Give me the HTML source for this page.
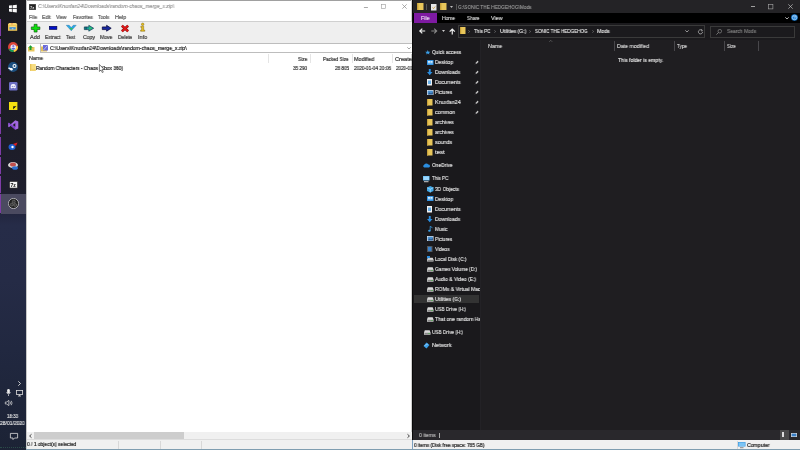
<!DOCTYPE html>
<html><head><meta charset="utf-8">
<style>
*{margin:0;padding:0;box-sizing:border-box}
html,body{width:800px;height:450px;overflow:hidden;background:#000;font-family:"Liberation Sans",sans-serif}
.a{position:absolute}
.t{position:absolute;white-space:nowrap;line-height:1;transform-origin:0 0;will-change:transform}
svg.a{overflow:visible;will-change:transform}
</style></head><body>
<div class="a" style="left:0;top:0;width:26px;height:450px;background:linear-gradient(#19191e 0px,#1c1c25 100px,#1e1e2d 190px,#22253e 213px,#262c48 225px,#252b46 280px,#212840 350px,#1e253a 400px,#1c2335 450px)"></div>
<div class="a" style="left:0px;top:19px;width:1.2px;height:17px;background:#7e3ca6;"></div>
<div class="a" style="left:0px;top:39px;width:1.2px;height:16px;background:#7e3ca6;"></div>
<div class="a" style="left:0px;top:59px;width:1.2px;height:16px;background:#7e3ca6;"></div>
<div class="a" style="left:0px;top:78px;width:1.2px;height:16px;background:#7e3ca6;"></div>
<div class="a" style="left:0px;top:98px;width:1.2px;height:16px;background:#7e3ca6;"></div>
<div class="a" style="left:0px;top:117px;width:1.2px;height:17px;background:#7e3ca6;"></div>
<div class="a" style="left:0px;top:137px;width:1.2px;height:18px;background:#7e3ca6;"></div>
<div class="a" style="left:0px;top:157px;width:1.2px;height:17px;background:#7e3ca6;"></div>
<div class="a" style="left:0px;top:176px;width:1.2px;height:17px;background:#7e3ca6;"></div>
<div class="a" style="left:0px;top:194px;width:1.2px;height:19px;background:#7e3ca6;"></div>
<div class="a" style="left:1.2px;top:194px;width:24.8px;height:19.5px;background:#4b4a60;"></div>
<svg class="a" style="left:8.8px;top:5px" width="7.8" height="7.6" viewBox="0 0 7.8 7.6"><path d="M0 0.6L2.9 0.25V3.2H0Z M3.6 0.15L7.8 -0.3V3.2H3.6Z M0 3.9H2.9V6.9L0 6.6Z M3.6 3.9H7.8V7.5L3.6 7.0Z" fill="#fafafa"/></svg>
<svg class="a" style="left:8px;top:23.2px" width="9.2" height="7.8" viewBox="0 0 9.2 7.8"><rect x="0" y="1" width="9.2" height="6.8" fill="#ecc455"/><rect x="0.6" y="0" width="8" height="2" fill="#f4d470"/><circle cx="4" cy="0.8" r="0.6" fill="#e05030"/><rect x="1.5" y="3.6" width="6.2" height="0.6" fill="#fff2c0"/><rect x="1.5" y="4.2" width="6.2" height="2.2" fill="#3a8ed8"/><rect x="3.8" y="5.2" width="1.6" height="1.2" fill="#a8d0f0"/></svg>
<svg class="a" style="left:8px;top:42px" width="10" height="10" viewBox="0 0 10 10"><circle cx="5" cy="5" r="5" fill="#db4437"/><path d="M5 5L0.7 7.5A5 5 0 0 0 6 9.9Z" fill="#0f9d58"/><path d="M5 5L9.9 4A5 5 0 0 1 6 9.9Z" fill="#ffcd40"/><circle cx="5.3" cy="5.2" r="2.8" fill="#e8e8f8"/><path d="M3.2 6.8Q5.3 4.5 7.4 6.8A2.6 2.6 0 0 1 3.2 6.8Z" fill="#5a6ad0"/><circle cx="5.3" cy="4.2" r="1.1" fill="#8a7ad8"/></svg>
<svg class="a" style="left:8px;top:62px" width="10" height="10" viewBox="0 0 10 10"><circle cx="5" cy="5" r="5" fill="#1b4f80"/><circle cx="6.5" cy="4" r="2" fill="#fff"/><circle cx="6.5" cy="4" r="1" fill="#1b4f80"/><path d="M0.5 6L4 7.5" stroke="#fff" stroke-width="1.4"/><circle cx="3.5" cy="7.3" r="1.2" fill="#fff"/></svg>
<svg class="a" style="left:8.8px;top:81.5px" width="8.5" height="8.5" viewBox="0 0 8.5 8.5"><rect x="0" y="0" width="8.5" height="8.5" rx="1.2" fill="#6b6fc4"/><path d="M1.6 5.8Q1.4 3.6 2.6 2.3Q4.25 1.8 5.9 2.3Q7.1 3.6 6.9 5.8Q5.8 6.6 5.3 6.3L5 5.8Q4.25 6 3.5 5.8L3.2 6.3Q2.7 6.6 1.6 5.8Z" fill="#f4f4ff"/><circle cx="3.3" cy="4.3" r="0.6" fill="#6b6fc4"/><circle cx="5.2" cy="4.3" r="0.6" fill="#6b6fc4"/></svg>
<svg class="a" style="left:8.8px;top:102px" width="8.4" height="8" viewBox="0 0 8.4 8"><rect x="0" y="0" width="8.4" height="8" fill="#f4e010"/><path d="M4.2 4.2H7.6L4.2 7.6Z" fill="#181818"/><path d="M7.6 4.2V5.5L5.5 7.6H4.2Z" fill="#f4e010"/></svg>
<svg class="a" style="left:7.5px;top:120px" width="10.5" height="10" viewBox="0 0 10.5 10"><path d="M7.3 0.2L10.3 1.6V8.4L7.3 9.8L2.7 5.8L0.9 7.2L0.2 6.8V3.2L0.9 2.8L2.7 4.2ZM7.3 3L4.7 5L7.3 7Z" fill="#a268e0"/><path d="M0.2 3.2L0.9 2.8L7.3 7.5V9.8L2.7 5.8Z" fill="#7a3cc8"/></svg>
<svg class="a" style="left:8px;top:142px" width="10" height="8" viewBox="0 0 10 8"><ellipse cx="4" cy="5" rx="3.5" ry="3" fill="#1e5fd0"/><path d="M5 2L9.5 0.5L8 4Z" fill="#e02020"/><circle cx="4.5" cy="5" r="1.2" fill="#fff"/></svg>
<svg class="a" style="left:8px;top:161px" width="11" height="9" viewBox="0 0 11 9"><ellipse cx="5" cy="4" rx="5" ry="3" fill="#d8d8d8"/><ellipse cx="5" cy="3.5" rx="3" ry="2" fill="#c0504d"/><ellipse cx="7" cy="7" rx="3" ry="1.8" fill="#2c6fd0"/></svg>
<svg class="a" style="left:8.5px;top:181px" width="9" height="7.5" viewBox="0 0 9 7.5"><rect x="0.4" y="0.4" width="8.2" height="6.7" fill="#f4f4f4" stroke="#111" stroke-width="0.6"/><text x="1.4" y="5.9" font-size="5.2" fill="#111" font-family="Liberation Sans" font-weight="bold">7z</text></svg>
<svg class="a" style="left:7.5px;top:198px" width="11" height="11" viewBox="0 0 11 11"><circle cx="5.5" cy="5.5" r="5.1" fill="#202020" stroke="#d8d8d8" stroke-width="0.7"/><circle cx="5.8" cy="3.6" r="1.5" fill="#3a3a3a" stroke="#9a9a9a" stroke-width="0.4"/><circle cx="3.8" cy="6.6" r="1.5" fill="#3a3a3a" stroke="#9a9a9a" stroke-width="0.4"/><circle cx="7.2" cy="7" r="1.5" fill="#3a3a3a" stroke="#9a9a9a" stroke-width="0.4"/></svg>
<svg class="a" style="left:17.5px;top:380.5px" width="3" height="5" viewBox="0 0 3 5"><path d="M0.3 0.3L2.5 2.5L0.3 4.7" stroke="#ddd" stroke-width="0.9" fill="none"/></svg>
<svg class="a" style="left:6px;top:388.5px" width="5" height="7" viewBox="0 0 5 7"><rect x="1.2" y="0" width="2.6" height="4.5" rx="1.3" fill="#eee"/><path d="M0.3 3.5Q2.5 6.5 4.7 3.5M2.5 5.5V7" stroke="#eee" stroke-width="0.7" fill="none"/></svg>
<svg class="a" style="left:15.5px;top:389.5px" width="7" height="6" viewBox="0 0 7 6"><rect x="0.4" y="0.4" width="6.2" height="4" fill="none" stroke="#ddd" stroke-width="0.8"/><path d="M3.5 4.5V6M2 6H5" stroke="#ddd" stroke-width="0.8"/></svg>
<svg class="a" style="left:5px;top:399.5px" width="8" height="6" viewBox="0 0 8 6"><path d="M0.3 2H1.8L3.8 0.3V5.7L1.8 4H0.3Z" fill="none" stroke="#ddd" stroke-width="0.7"/><path d="M5 1.5Q6 3 5 4.5M6.3 0.8Q7.8 3 6.3 5.2" stroke="#ddd" stroke-width="0.7" fill="none"/></svg>
<div class="t" style="left:7.20px;top:413.99px;font-size:5px;color:#e8e8e8;transform:scaleX(0.881);-webkit-text-stroke:0.13px #e8e8e8;">18:33</div>
<div class="t" style="left:0.20px;top:420.99px;font-size:5px;color:#e8e8e8;transform:scaleX(0.982);-webkit-text-stroke:0.13px #e8e8e8;">28/01/2020</div>
<svg class="a" style="left:9.5px;top:433px" width="8" height="7" viewBox="0 0 8 7"><path d="M0.4 0.4H7.6V5H4.5L3 6.6V5H0.4Z" fill="none" stroke="#ddd" stroke-width="0.8"/></svg>
<div class="a" style="left:0;top:447px;width:26px;height:1px;border-top:1px dotted #2a4a48"></div>
<div class="a" style="left:26px;top:0px;width:386px;height:450px;background:#ffffff;"></div>
<div class="a" style="left:26px;top:0px;width:386px;height:1px;background:#a0a0a0;"></div>
<div class="a" style="left:26px;top:0px;width:1px;height:450px;background:#c8c8c8;"></div>
<div class="a" style="left:410.5px;top:0px;width:1.5px;height:440px;background:#d0d0d0;"></div>
<svg class="a" style="left:29px;top:4px" width="7" height="6" viewBox="0 0 7 6"><rect x="0" y="0" width="7" height="6" fill="#555"/><rect x="0.7" y="0.7" width="5.6" height="4.6" fill="#222"/><text x="0.9" y="4.8" font-size="4.2" fill="#ddd" font-family="Liberation Sans" font-weight="bold">7z</text></svg>
<div class="t" style="left:38.16px;top:4.28px;font-size:5.6px;color:#929292;transform:scaleX(0.897);-webkit-text-stroke:0.13px #929292;font-style:italic">C:\Users\Knuxfan24\Downloads\random-chaos_merge_x.zip\</div>
<div class="t" style="left:363.64px;top:3.98px;font-size:6px;color:#888;transform:scaleX(1.143);-webkit-text-stroke:0.2px #888;">–</div>
<svg class="a" style="left:381px;top:3.5px" width="5" height="5" viewBox="0 0 5 5"><rect x="0.5" y="0.5" width="4" height="4" fill="none" stroke="#999" stroke-width="0.6"/></svg>
<svg class="a" style="left:402px;top:4px" width="5" height="5" viewBox="0 0 5 5"><path d="M0.3 0.3L4.7 4.7M4.7 0.3L0.3 4.7" stroke="#888" stroke-width="0.7"/></svg>
<div class="t" style="left:28.57px;top:14.54px;font-size:5.5px;color:#5a5a5a;transform:scaleX(0.925);-webkit-text-stroke:0.2px #5a5a5a;">File</div>
<div class="t" style="left:42.47px;top:14.54px;font-size:5.5px;color:#5a5a5a;transform:scaleX(0.918);-webkit-text-stroke:0.2px #5a5a5a;">Edit</div>
<div class="t" style="left:56.47px;top:14.54px;font-size:5.5px;color:#5a5a5a;transform:scaleX(0.886);-webkit-text-stroke:0.2px #5a5a5a;">View</div>
<div class="t" style="left:72.67px;top:14.54px;font-size:5.5px;color:#5a5a5a;transform:scaleX(0.879);-webkit-text-stroke:0.2px #5a5a5a;">Favorites</div>
<div class="t" style="left:98.27px;top:14.54px;font-size:5.5px;color:#5a5a5a;transform:scaleX(0.878);-webkit-text-stroke:0.2px #5a5a5a;">Tools</div>
<div class="t" style="left:114.87px;top:14.54px;font-size:5.5px;color:#5a5a5a;transform:scaleX(0.986);-webkit-text-stroke:0.2px #5a5a5a;">Help</div>
<div class="a" style="left:27px;top:21px;width:385px;height:1px;background:#d0d0d0;"></div>
<div class="a" style="left:27px;top:22px;width:385px;height:20.5px;background:#efefef;"></div>
<div class="a" style="left:27px;top:42.5px;width:385px;height:1px;background:#d4d4d4;"></div>
<svg class="a" style="left:30.8px;top:24px" width="9.2" height="8.4" viewBox="0 0 9.2 8.4"><path d="M3.1 0.3H6.1V2.9H8.9V5.5H6.1V8.1H3.1V5.5H0.3V2.9H3.1Z" fill="#10e010" stroke="#064a06" stroke-width="0.6"/></svg>
<svg class="a" style="left:49px;top:26.4px" width="8.2" height="3.8" viewBox="0 0 8.2 3.8"><rect x="0.3" y="0.3" width="7.6" height="3.2" fill="#0010c8" stroke="#000040" stroke-width="0.6"/></svg>
<svg class="a" style="left:65.5px;top:25.3px" width="10.5" height="6" viewBox="0 0 10.5 6"><path d="M0.3 0.3H3.2L5.25 2.6L7.3 0.3H10.2L5.25 5.8Z" fill="#2aa8e8" stroke="#1a6a9a" stroke-width="0.4"/><path d="M3.5 3L5.25 5.2L7 3" fill="#30c060"/></svg>
<svg class="a" style="left:84px;top:24.8px" width="10" height="6.5" viewBox="0 0 10 6.5"><path d="M4.8 0.3L9.7 3.25L4.8 6.2V4.6H0.3V1.9H4.8Z" fill="#18a0a0" stroke="#0a2a40" stroke-width="0.6"/><path d="M1.2 1.9V4.6M2.6 1.9V4.6" stroke="#0a3050" stroke-width="0.6"/><path d="M5.3 1.5L8.3 3.25L5.3 5Z" fill="#30c070"/></svg>
<svg class="a" style="left:102px;top:24.8px" width="9.5" height="6.5" viewBox="0 0 9.5 6.5"><path d="M4.6 0.3L9.2 3.25L4.6 6.2V4.6H0.3V1.9H4.6Z" fill="#1a2aa0" stroke="#000030" stroke-width="0.7"/></svg>
<svg class="a" style="left:121px;top:25px" width="8" height="7" viewBox="0 0 8 7"><path d="M0.9 0.7L7.1 6.3M7.1 0.7L0.9 6.3" stroke="#801010" stroke-width="2.6"/><path d="M0.9 0.7L7.1 6.3M7.1 0.7L0.9 6.3" stroke="#e01818" stroke-width="1.7"/></svg>
<svg class="a" style="left:139.8px;top:23.3px" width="5.4" height="8.6" viewBox="0 0 5.4 8.6"><circle cx="2.7" cy="1.3" r="1.25" fill="#e8c020" stroke="#6a5000" stroke-width="0.4"/><path d="M0.8 3.2H3.7V7.1H4.8V8.3H0.6V7.1H1.6V4.4H0.8Z" fill="#e8c020" stroke="#6a5000" stroke-width="0.4"/></svg>
<div class="t" style="left:30.16px;top:34.58px;font-size:5.6px;color:#3a3a3a;transform:scaleX(1.002);-webkit-text-stroke:0.2px #3a3a3a;">Add</div>
<div class="t" style="left:45.16px;top:34.58px;font-size:5.6px;color:#3a3a3a;transform:scaleX(0.896);-webkit-text-stroke:0.2px #3a3a3a;">Extract</div>
<div class="t" style="left:66.36px;top:34.58px;font-size:5.6px;color:#3a3a3a;transform:scaleX(0.876);-webkit-text-stroke:0.2px #3a3a3a;">Test</div>
<div class="t" style="left:82.56px;top:34.58px;font-size:5.6px;color:#3a3a3a;transform:scaleX(0.920);-webkit-text-stroke:0.2px #3a3a3a;">Copy</div>
<div class="t" style="left:100.46px;top:34.58px;font-size:5.6px;color:#3a3a3a;transform:scaleX(0.899);-webkit-text-stroke:0.2px #3a3a3a;">Move</div>
<div class="t" style="left:117.56px;top:34.58px;font-size:5.6px;color:#3a3a3a;transform:scaleX(0.871);-webkit-text-stroke:0.2px #3a3a3a;">Delete</div>
<div class="t" style="left:137.86px;top:34.58px;font-size:5.6px;color:#3a3a3a;transform:scaleX(0.980);-webkit-text-stroke:0.2px #3a3a3a;">Info</div>
<div class="a" style="left:27px;top:43.5px;width:385px;height:10px;background:#ffffff;"></div>
<svg class="a" style="left:28px;top:45px" width="6.5" height="6.5" viewBox="0 0 6.5 6.5"><path d="M0 2H6.5V6.5H0Z" fill="#e8c860"/><path d="M2.5 0.3L4.8 2.5H3.5V5H1.5V2.5H0.3Z" fill="#1aa030"/></svg>
<div class="a" style="left:39.5px;top:43px;width:373px;height:9.5px;background:#ffffff;border:1px solid #bdbdbd;border-right:none"></div>
<svg class="a" style="left:41px;top:44.8px" width="7" height="6.5" viewBox="0 0 7 6.5"><rect x="0" y="1.5" width="6" height="5" fill="#e2c05a"/><rect x="2" y="0" width="5" height="5.5" fill="#6a6ad8"/><path d="M2.5 5L6.5 0.5" stroke="#d0d0f0" stroke-width="0.8"/></svg>
<div class="t" style="left:49.66px;top:46.08px;font-size:5.6px;color:#222;transform:scaleX(0.900);-webkit-text-stroke:0.2px #222;">C:\Users\Knuxfan24\Downloads\random-chaos_merge_x.zip\</div>
<svg class="a" style="left:406.5px;top:47px" width="4" height="2.5" viewBox="0 0 4 2.5"><path d="M0.3 0.3L2 2L3.7 0.3" stroke="#666" stroke-width="0.6" fill="none"/></svg>
<div class="a" style="left:268px;top:54px;width:0.7px;height:9px;background:#e5e5e5;"></div>
<div class="a" style="left:309.6px;top:54px;width:0.7px;height:9px;background:#e5e5e5;"></div>
<div class="a" style="left:351.6px;top:54px;width:0.7px;height:9px;background:#e5e5e5;"></div>
<div class="a" style="left:392.4px;top:54px;width:0.7px;height:9px;background:#e5e5e5;"></div>
<div class="t" style="left:29.17px;top:56.24px;font-size:5.5px;color:#333;transform:scaleX(0.963);-webkit-text-stroke:0.2px #333;">Name</div>
<div class="t" style="left:298.27px;top:56.54px;font-size:5.5px;color:#333;transform:scaleX(0.856);-webkit-text-stroke:0.2px #333;">Size</div>
<div class="t" style="left:323.27px;top:56.54px;font-size:5.5px;color:#333;transform:scaleX(0.836);-webkit-text-stroke:0.2px #333;">Packed Size</div>
<div class="t" style="left:353.67px;top:56.54px;font-size:5.5px;color:#333;transform:scaleX(0.973);-webkit-text-stroke:0.2px #333;">Modified</div>
<div class="t" style="left:395.27px;top:56.54px;font-size:5.5px;color:#333;transform:scaleX(1.025);-webkit-text-stroke:0.2px #333;">Created</div>
<svg class="a" style="left:29.8px;top:64px" width="5.8" height="6.8" viewBox="0 0 5.8 6.8"><rect x="0" y="0" width="5.8" height="6.8" fill="#f6dc80"/><rect x="0" y="0" width="1.3" height="6.8" fill="#e8c458"/><rect x="1.3" y="5.2" width="4.5" height="1.6" fill="#f0cf68"/></svg>
<div class="t" style="left:35.97px;top:65.64px;font-size:5.5px;color:#1a1a1a;transform:scaleX(0.884);-webkit-text-stroke:0.2px #1a1a1a;">Random Characters - Chaos (Xbox 360)</div>
<div class="t" style="left:293.28px;top:65.84px;font-size:5.3px;color:#333;transform:scaleX(0.874);-webkit-text-stroke:0.2px #333;">35 290</div>
<div class="t" style="left:334.68px;top:65.84px;font-size:5.3px;color:#333;transform:scaleX(0.874);-webkit-text-stroke:0.2px #333;">28 805</div>
<div class="t" style="left:353.68px;top:65.84px;font-size:5.3px;color:#333;transform:scaleX(0.884);-webkit-text-stroke:0.2px #333;">2020-01-04 20:06</div>
<div class="t" style="left:395.68px;top:65.84px;font-size:5.3px;color:#333;transform:scaleX(0.850);-webkit-text-stroke:0.2px #333;">2020-01</div>
<svg class="a" style="left:98.5px;top:64px" width="6" height="9" viewBox="0 0 6 9"><path d="M0.4 0.4V7.5L2 6L3.3 8.6L4.3 8.1L3.1 5.6H5.2Z" fill="#fff" stroke="#333" stroke-width="0.6"/></svg>
<div class="a" style="left:27px;top:431.5px;width:385px;height:7.5px;background:#f0f0f0;"></div>
<div class="a" style="left:34.3px;top:432px;width:149.5px;height:6.8px;background:#cdcdcd;"></div>
<svg class="a" style="left:28.5px;top:433.5px" width="3" height="4" viewBox="0 0 3 4"><path d="M2.5 0.3L0.6 2L2.5 3.7" stroke="#333" stroke-width="0.9" fill="none"/></svg>
<svg class="a" style="left:406.5px;top:433.5px" width="3" height="4" viewBox="0 0 3 4"><path d="M0.5 0.3L2.4 2L0.5 3.7" stroke="#333" stroke-width="0.9" fill="none"/></svg>
<div class="a" style="left:27px;top:439px;width:385px;height:1px;background:#dcdcdc;"></div>
<div class="a" style="left:27px;top:440px;width:385px;height:9px;background:#f0f0f0;"></div>
<div class="a" style="left:117.5px;top:440.5px;width:0.7px;height:8.5px;background:#d8d8d8;"></div>
<div class="a" style="left:159.5px;top:440.5px;width:0.7px;height:8.5px;background:#d8d8d8;"></div>
<div class="a" style="left:201.3px;top:440.5px;width:0.7px;height:8.5px;background:#d8d8d8;"></div>
<div class="t" style="left:26.97px;top:442.24px;font-size:5.5px;color:#222;transform:scaleX(0.891);-webkit-text-stroke:0.2px #222;">0 / 1 object(s) selected</div>
<div class="a" style="left:26px;top:449px;width:386px;height:1px;background:#7f9db0;"></div>
<div class="a" style="left:412px;top:0px;width:1px;height:450px;background:#0a0a0a;"></div>
<div class="a" style="left:413px;top:0px;width:387px;height:12.5px;background:#242326;"></div>
<div class="a" style="left:413px;top:12.5px;width:387px;height:10px;background:#000000;"></div>
<div class="a" style="left:413px;top:22.5px;width:387px;height:17.5px;background:#1b1a1d;"></div>
<div class="a" style="left:413px;top:40px;width:67px;height:390px;background:#1a191c;"></div>
<div class="a" style="left:480px;top:40px;width:320px;height:390px;background:#1f1e21;"></div>
<div class="a" style="left:480px;top:40px;width:1px;height:390px;background:#232226;"></div>
<div class="a" style="left:413px;top:430px;width:387px;height:10px;background:#29282c;"></div>
<svg class="a" style="left:417px;top:3px" width="6.5" height="7" viewBox="0 0 6.5 7"><rect x="0" y="0" width="6.5" height="7" fill="#e8c65a"/><rect x="0" y="0" width="1.4" height="7" fill="#c9a23a"/></svg>
<div class="a" style="left:426px;top:4px;width:0.7px;height:5.5px;background:#555;"></div>
<svg class="a" style="left:431px;top:3.5px" width="5.5" height="6.5" viewBox="0 0 5.5 6.5"><rect x="0" y="0" width="5.5" height="6.5" fill="#e8e8e8"/><path d="M1.5 3.5L2.5 4.6L4.2 2.5" stroke="#d09020" stroke-width="0.7" fill="none"/></svg>
<svg class="a" style="left:440px;top:3px" width="6.5" height="7" viewBox="0 0 6.5 7"><rect x="0" y="0" width="6.5" height="7" fill="#e8c65a"/><rect x="0" y="0" width="1.4" height="7" fill="#c9a23a"/></svg>
<svg class="a" style="left:449.5px;top:5.5px" width="3" height="2" viewBox="0 0 3 2"><path d="M0 0H3L1.5 2Z" fill="#bbb"/></svg>
<div class="a" style="left:455.5px;top:4px;width:0.7px;height:5.5px;background:#555;"></div>
<div class="t" style="left:458.16px;top:4.73px;font-size:5.7px;color:#9a9a9a;transform:scaleX(0.829);-webkit-text-stroke:0.13px #9a9a9a;">G:\SONIC THE HEDGEHOG\Mods</div>
<div class="a" style="left:750.5px;top:5.9px;width:4.5px;height:0.7px;background:#a0a0a0;"></div>
<svg class="a" style="left:768px;top:4px" width="5.5" height="5.5" viewBox="0 0 5.5 5.5"><rect x="0.6" y="0.6" width="4.3" height="4.3" fill="none" stroke="#aaa" stroke-width="0.6"/></svg>
<svg class="a" style="left:788px;top:4px" width="5" height="5" viewBox="0 0 5 5"><path d="M0.3 0.3L4.7 4.7M4.7 0.3L0.3 4.7" stroke="#bbb" stroke-width="0.7"/></svg>
<div class="a" style="left:413.5px;top:12.5px;width:23.5px;height:10px;background:#7e1aa2;"></div>
<div class="t" style="left:420.67px;top:15.74px;font-size:5.5px;color:#e8d8f0;transform:scaleX(0.974);-webkit-text-stroke:0.13px #e8d8f0;">File</div>
<div class="t" style="left:442.17px;top:15.74px;font-size:5.5px;color:#dcdcdc;transform:scaleX(0.892);-webkit-text-stroke:0.13px #dcdcdc;">Home</div>
<div class="t" style="left:466.67px;top:15.74px;font-size:5.5px;color:#dcdcdc;transform:scaleX(0.855);-webkit-text-stroke:0.13px #dcdcdc;">Share</div>
<div class="t" style="left:490.67px;top:15.74px;font-size:5.5px;color:#dcdcdc;transform:scaleX(0.985);-webkit-text-stroke:0.13px #dcdcdc;">View</div>
<svg class="a" style="left:784.5px;top:16.5px" width="4" height="2.5" viewBox="0 0 4 2.5"><path d="M0.3 0.3L2 2L3.7 0.3" stroke="#ddd" stroke-width="0.8" fill="none"/></svg>
<svg class="a" style="left:791px;top:14px" width="7" height="7" viewBox="0 0 7 7"><circle cx="3.5" cy="3.5" r="3.3" fill="#1a7fd8"/><circle cx="3.5" cy="3.5" r="2.2" fill="none" stroke="#fff" stroke-width="0.5"/><text x="2.3" y="5.2" font-size="4.4" fill="#fff" font-family="Liberation Sans">?</text></svg>
<svg class="a" style="left:418.5px;top:28px" width="6.5" height="6" viewBox="0 0 6.5 6"><path d="M6.2 3H1M3.3 0.6L0.8 3L3.3 5.4" stroke="#f0f0f0" stroke-width="1.2" fill="none"/></svg>
<svg class="a" style="left:430.5px;top:28px" width="6.5" height="6" viewBox="0 0 6.5 6"><path d="M0.3 3H5.5M3.2 0.6L5.7 3L3.2 5.4" stroke="#8a8a8a" stroke-width="1.1" fill="none"/></svg>
<svg class="a" style="left:442px;top:30px" width="3" height="2" viewBox="0 0 3 2"><path d="M0 0H3L1.5 2Z" fill="#ccc"/></svg>
<svg class="a" style="left:449px;top:27.8px" width="6.5" height="6.5" viewBox="0 0 6.5 6.5"><path d="M3.25 6.5V1.2M0.7 3.7L3.25 1L5.8 3.7" stroke="#f0f0f0" stroke-width="1.2" fill="none"/></svg>
<div class="a" style="left:457.5px;top:25px;width:247.5px;height:12.5px;background:#1b1a1d;border:0.8px solid #3a3a3a"></div>
<svg class="a" style="left:459.5px;top:27px" width="5.5" height="7" viewBox="0 0 5.5 7"><rect x="0" y="0" width="5.5" height="7" fill="#e8c65a"/><rect x="0" y="0" width="1.2" height="7" fill="#c9a23a"/></svg>
<svg class="a" style="left:468.2px;top:29.8px" width="2.2" height="3" viewBox="0 0 2.2 3"><path d="M0.3 0.3L1.7 1.5L0.3 2.7" stroke="#999" stroke-width="0.5" fill="none"/></svg>
<svg class="a" style="left:494.2px;top:29.8px" width="2.2" height="3" viewBox="0 0 2.2 3"><path d="M0.3 0.3L1.7 1.5L0.3 2.7" stroke="#999" stroke-width="0.5" fill="none"/></svg>
<svg class="a" style="left:529.2px;top:29.8px" width="2.2" height="3" viewBox="0 0 2.2 3"><path d="M0.3 0.3L1.7 1.5L0.3 2.7" stroke="#999" stroke-width="0.5" fill="none"/></svg>
<svg class="a" style="left:591.6px;top:29.8px" width="2.2" height="3" viewBox="0 0 2.2 3"><path d="M0.3 0.3L1.7 1.5L0.3 2.7" stroke="#999" stroke-width="0.5" fill="none"/></svg>
<div class="t" style="left:473.67px;top:28.74px;font-size:5.5px;color:#e6e6e6;transform:scaleX(0.846);-webkit-text-stroke:0.13px #e6e6e6;">This PC</div>
<div class="t" style="left:499.67px;top:28.74px;font-size:5.5px;color:#e6e6e6;transform:scaleX(0.912);-webkit-text-stroke:0.13px #e6e6e6;">Utilities (G:)</div>
<div class="t" style="left:534.67px;top:28.74px;font-size:5.5px;color:#e6e6e6;transform:scaleX(0.828);-webkit-text-stroke:0.13px #e6e6e6;">SONIC THE HEDGEHOG</div>
<div class="t" style="left:596.67px;top:28.74px;font-size:5.5px;color:#e6e6e6;transform:scaleX(0.938);-webkit-text-stroke:0.13px #e6e6e6;">Mods</div>
<svg class="a" style="left:684.5px;top:30px" width="4" height="2.5" viewBox="0 0 4 2.5"><path d="M0.3 0.3L2 2L3.7 0.3" stroke="#ccc" stroke-width="0.7" fill="none"/></svg>
<svg class="a" style="left:697.5px;top:28.5px" width="5" height="5" viewBox="0 0 5 5"><path d="M4.2 1.6A2.1 2.1 0 1 0 4.6 2.9" stroke="#ccc" stroke-width="0.7" fill="none"/><path d="M3.5 0.3L4.4 1.6L3.1 2.1" stroke="#ccc" stroke-width="0.6" fill="none"/></svg>
<div class="a" style="left:710px;top:25.5px;width:85px;height:12px;background:#1b1a1d;border:0.8px solid #3a3a3a"></div>
<svg class="a" style="left:716px;top:28.5px" width="6" height="6" viewBox="0 0 6 6"><circle cx="3.8" cy="2.2" r="1.8" stroke="#999" stroke-width="0.6" fill="none"/><path d="M2.5 3.5L0.4 5.6" stroke="#999" stroke-width="0.7"/></svg>
<div class="t" style="left:727.17px;top:28.74px;font-size:5.5px;color:#7a7a7a;transform:scaleX(0.898);-webkit-text-stroke:0.2px #7a7a7a;">Search Mods</div>
<div class="a" style="left:614.2px;top:40.5px;width:0.9px;height:10px;background:#48474b;"></div>
<div class="a" style="left:674px;top:40.5px;width:0.9px;height:10px;background:#48474b;"></div>
<div class="a" style="left:724.2px;top:40.5px;width:0.9px;height:10px;background:#48474b;"></div>
<div class="a" style="left:758px;top:40.5px;width:0.9px;height:10px;background:#48474b;"></div>
<div class="t" style="left:487.67px;top:43.74px;font-size:5.5px;color:#dcdcdc;transform:scaleX(0.971);-webkit-text-stroke:0.13px #dcdcdc;">Name</div>
<svg class="a" style="left:548.5px;top:40px" width="3.5" height="2" viewBox="0 0 3.5 2"><path d="M0.3 1.8L1.75 0.3L3.2 1.8" stroke="#888" stroke-width="0.5" fill="none"/></svg>
<div class="t" style="left:617.17px;top:43.74px;font-size:5.5px;color:#dcdcdc;transform:scaleX(0.947);-webkit-text-stroke:0.13px #dcdcdc;">Date modified</div>
<div class="t" style="left:677.17px;top:43.74px;font-size:5.5px;color:#dcdcdc;transform:scaleX(0.842);-webkit-text-stroke:0.13px #dcdcdc;">Type</div>
<div class="t" style="left:727.37px;top:43.64px;font-size:5.5px;color:#dcdcdc;transform:scaleX(0.807);-webkit-text-stroke:0.13px #dcdcdc;">Size</div>
<div class="t" style="left:618.17px;top:58.24px;font-size:5.5px;color:#e6e6e6;transform:scaleX(0.924);-webkit-text-stroke:0.13px #e6e6e6;">This folder is empty.</div>
<svg class="a" style="left:424.5px;top:49.8px" width="5.5" height="4.5" viewBox="0 0 5.5 4.5"><path d="M2.8 0L3.5 1.7L5.4 1.8L4 3L4.4 4.5L2.8 3.6L1.2 4.5L1.6 3L0.2 1.8L2.1 1.7Z" fill="#3a9fe8"/></svg>
<div class="t" style="left:431.66px;top:49.98px;font-size:5.6px;color:#e6e6e6;transform:scaleX(0.874);-webkit-text-stroke:0.13px #e6e6e6;">Quick access</div>
<svg class="a" style="left:426.5px;top:59.5px" width="6.5" height="5" viewBox="0 0 6.5 5"><rect x="0" y="0" width="6.5" height="5" fill="#2b8ee0"/><rect x="0.7" y="0.8" width="5.1" height="3.4" fill="#5fb0f0"/><path d="M1 1.2H3V2.6H1Z M3.5 1.2H5.5V2.6H3.5Z" fill="#fff"/></svg>
<div class="t" style="left:435.16px;top:59.68px;font-size:5.6px;color:#e6e6e6;transform:scaleX(0.881);-webkit-text-stroke:0.13px #e6e6e6;">Desktop</div>
<svg class="a" style="left:474.8px;top:59.8px" width="4.2" height="4.4" viewBox="0 0 4.2 4.4"><path d="M2.2 0.4L3.8 2L3.1 2.3L2 3.4L1.9 4L0.4 2.5L1 2.4L2.1 1.3Z" fill="#c8c8c8"/><path d="M1.2 3.2L0.2 4.2" stroke="#c8c8c8" stroke-width="0.5"/></svg>
<svg class="a" style="left:427.0px;top:69px" width="5.5" height="6.5" viewBox="0 0 5.5 6.5"><path d="M1.8 0H3.7V3H5.5L2.75 6.3L0 3H1.8Z" fill="#2b8ee0"/></svg>
<div class="t" style="left:435.16px;top:69.68px;font-size:5.6px;color:#e6e6e6;transform:scaleX(0.907);-webkit-text-stroke:0.13px #e6e6e6;">Downloads</div>
<svg class="a" style="left:474.8px;top:69.8px" width="4.2" height="4.4" viewBox="0 0 4.2 4.4"><path d="M2.2 0.4L3.8 2L3.1 2.3L2 3.4L1.9 4L0.4 2.5L1 2.4L2.1 1.3Z" fill="#c8c8c8"/><path d="M1.2 3.2L0.2 4.2" stroke="#c8c8c8" stroke-width="0.5"/></svg>
<svg class="a" style="left:427.0px;top:78.8px" width="5" height="6.5" viewBox="0 0 5 6.5"><rect x="0" y="0" width="5" height="6.5" fill="#f0f0f0"/><rect x="1" y="1.5" width="3" height="3.5" fill="#6ab0e8"/></svg>
<div class="t" style="left:435.16px;top:79.68px;font-size:5.6px;color:#e6e6e6;transform:scaleX(0.905);-webkit-text-stroke:0.13px #e6e6e6;">Documents</div>
<svg class="a" style="left:474.8px;top:79.8px" width="4.2" height="4.4" viewBox="0 0 4.2 4.4"><path d="M2.2 0.4L3.8 2L3.1 2.3L2 3.4L1.9 4L0.4 2.5L1 2.4L2.1 1.3Z" fill="#c8c8c8"/><path d="M1.2 3.2L0.2 4.2" stroke="#c8c8c8" stroke-width="0.5"/></svg>
<svg class="a" style="left:426.5px;top:89.5px" width="6.5" height="5" viewBox="0 0 6.5 5"><rect x="0" y="0" width="6.5" height="5" fill="#e8e8e8"/><rect x="0.6" y="0.6" width="5.3" height="3.8" fill="#4a90d0"/><path d="M0.6 4.4L2.5 2.5L4 3.6L5.9 2V4.4Z" fill="#2a5a90"/></svg>
<div class="t" style="left:435.16px;top:89.68px;font-size:5.6px;color:#e6e6e6;transform:scaleX(0.844);-webkit-text-stroke:0.13px #e6e6e6;">Pictures</div>
<svg class="a" style="left:474.8px;top:89.8px" width="4.2" height="4.4" viewBox="0 0 4.2 4.4"><path d="M2.2 0.4L3.8 2L3.1 2.3L2 3.4L1.9 4L0.4 2.5L1 2.4L2.1 1.3Z" fill="#c8c8c8"/><path d="M1.2 3.2L0.2 4.2" stroke="#c8c8c8" stroke-width="0.5"/></svg>
<svg class="a" style="left:427.0px;top:98.8px" width="5.5" height="6.5" viewBox="0 0 5.5 6.5"><rect x="0" y="0" width="5.5" height="6.5" fill="#e8c65a"/><rect x="0" y="0" width="1.2" height="6.5" fill="#c9a23a"/></svg>
<div class="t" style="left:435.16px;top:99.68px;font-size:5.6px;color:#e6e6e6;transform:scaleX(0.959);-webkit-text-stroke:0.13px #e6e6e6;">Knuxfan24</div>
<svg class="a" style="left:474.8px;top:99.8px" width="4.2" height="4.4" viewBox="0 0 4.2 4.4"><path d="M2.2 0.4L3.8 2L3.1 2.3L2 3.4L1.9 4L0.4 2.5L1 2.4L2.1 1.3Z" fill="#c8c8c8"/><path d="M1.2 3.2L0.2 4.2" stroke="#c8c8c8" stroke-width="0.5"/></svg>
<svg class="a" style="left:427.0px;top:108.8px" width="5.5" height="6.5" viewBox="0 0 5.5 6.5"><rect x="0" y="0" width="5.5" height="6.5" fill="#e8c65a"/><rect x="0" y="0" width="1.2" height="6.5" fill="#c9a23a"/></svg>
<div class="t" style="left:435.16px;top:109.68px;font-size:5.6px;color:#e6e6e6;transform:scaleX(0.938);-webkit-text-stroke:0.13px #e6e6e6;">common</div>
<svg class="a" style="left:474.8px;top:109.8px" width="4.2" height="4.4" viewBox="0 0 4.2 4.4"><path d="M2.2 0.4L3.8 2L3.1 2.3L2 3.4L1.9 4L0.4 2.5L1 2.4L2.1 1.3Z" fill="#c8c8c8"/><path d="M1.2 3.2L0.2 4.2" stroke="#c8c8c8" stroke-width="0.5"/></svg>
<svg class="a" style="left:427.0px;top:118.8px" width="5.5" height="6.5" viewBox="0 0 5.5 6.5"><rect x="0" y="0" width="5.5" height="6.5" fill="#e8c65a"/><rect x="0" y="0" width="1.2" height="6.5" fill="#c9a23a"/></svg>
<div class="t" style="left:435.16px;top:119.68px;font-size:5.6px;color:#e6e6e6;transform:scaleX(0.892);-webkit-text-stroke:0.13px #e6e6e6;">archives</div>
<svg class="a" style="left:427.0px;top:128.8px" width="5.5" height="6.5" viewBox="0 0 5.5 6.5"><rect x="0" y="0" width="5.5" height="6.5" fill="#e8c65a"/><rect x="0" y="0" width="1.2" height="6.5" fill="#c9a23a"/></svg>
<div class="t" style="left:435.16px;top:129.68px;font-size:5.6px;color:#e6e6e6;transform:scaleX(0.892);-webkit-text-stroke:0.13px #e6e6e6;">archives</div>
<svg class="a" style="left:427.0px;top:138.8px" width="5.5" height="6.5" viewBox="0 0 5.5 6.5"><rect x="0" y="0" width="5.5" height="6.5" fill="#e8c65a"/><rect x="0" y="0" width="1.2" height="6.5" fill="#c9a23a"/></svg>
<div class="t" style="left:435.16px;top:139.68px;font-size:5.6px;color:#e6e6e6;transform:scaleX(0.950);-webkit-text-stroke:0.13px #e6e6e6;">sounds</div>
<svg class="a" style="left:427.0px;top:148.8px" width="5.5" height="6.5" viewBox="0 0 5.5 6.5"><rect x="0" y="0" width="5.5" height="6.5" fill="#e8c65a"/><rect x="0" y="0" width="1.2" height="6.5" fill="#c9a23a"/></svg>
<div class="t" style="left:435.16px;top:149.68px;font-size:5.6px;color:#e6e6e6;transform:scaleX(1.077);-webkit-text-stroke:0.13px #e6e6e6;">test</div>
<svg class="a" style="left:423px;top:163.3px" width="7" height="4.5" viewBox="0 0 7 4.5"><path d="M1.3 4.5A1.3 1.3 0 0 1 1 2A2.4 2.4 0 0 1 5.3 1.6A1.5 1.5 0 0 1 6 4.5Z" fill="#2b8ee0"/></svg>
<div class="t" style="left:431.66px;top:163.08px;font-size:5.6px;color:#e6e6e6;transform:scaleX(0.871);-webkit-text-stroke:0.13px #e6e6e6;">OneDrive</div>
<svg class="a" style="left:423px;top:175.5px" width="6.5" height="6.5" viewBox="0 0 6.5 6.5"><rect x="0" y="0" width="6.5" height="4.5" fill="#5fb8f0"/><rect x="0.5" y="0.5" width="5.5" height="3.5" fill="#9ad8ff"/><rect x="1" y="5.2" width="4.5" height="1" fill="#ccc"/></svg>
<div class="t" style="left:432.16px;top:176.38px;font-size:5.6px;color:#e6e6e6;transform:scaleX(0.832);-webkit-text-stroke:0.13px #e6e6e6;">This PC</div>
<div class="a" style="left:414px;top:294.5px;width:65px;height:8.7px;background:#333333;"></div>
<svg class="a" style="left:426.5px;top:186px" width="6.5" height="6.5" viewBox="0 0 6.5 6.5"><path d="M3.25 0L6.5 1.6V4.9L3.25 6.5L0 4.9V1.6Z" fill="#3fa8e8"/><path d="M3.25 3.2L6.5 1.6M3.25 3.2L0 1.6M3.25 3.2V6.5" stroke="#d8f0ff" stroke-width="0.5"/></svg>
<div class="t" style="left:435.16px;top:186.68px;font-size:5.6px;color:#e6e6e6;transform:scaleX(0.870);-webkit-text-stroke:0.13px #e6e6e6;">3D Objects</div>
<svg class="a" style="left:426.5px;top:196.4px" width="6.5" height="5" viewBox="0 0 6.5 5"><rect x="0" y="0" width="6.5" height="5" fill="#2b8ee0"/><rect x="0.7" y="0.8" width="5.1" height="3.4" fill="#5fb0f0"/><path d="M1 1.2H3V2.6H1Z M3.5 1.2H5.5V2.6H3.5Z" fill="#fff"/></svg>
<div class="t" style="left:435.16px;top:196.58px;font-size:5.6px;color:#e6e6e6;transform:scaleX(0.881);-webkit-text-stroke:0.13px #e6e6e6;">Desktop</div>
<svg class="a" style="left:427.0px;top:205.70000000000002px" width="5" height="6.5" viewBox="0 0 5 6.5"><rect x="0" y="0" width="5" height="6.5" fill="#f0f0f0"/><rect x="1" y="1.5" width="3" height="3.5" fill="#6ab0e8"/></svg>
<div class="t" style="left:435.16px;top:206.58px;font-size:5.6px;color:#e6e6e6;transform:scaleX(0.905);-webkit-text-stroke:0.13px #e6e6e6;">Documents</div>
<svg class="a" style="left:427.0px;top:215.9px" width="5.5" height="6.5" viewBox="0 0 5.5 6.5"><path d="M1.8 0H3.7V3H5.5L2.75 6.3L0 3H1.8Z" fill="#2b8ee0"/></svg>
<div class="t" style="left:435.16px;top:216.58px;font-size:5.6px;color:#e6e6e6;transform:scaleX(0.907);-webkit-text-stroke:0.13px #e6e6e6;">Downloads</div>
<svg class="a" style="left:427.5px;top:225.9px" width="5" height="6" viewBox="0 0 5 6"><path d="M2.2 0.3V4.6" stroke="#3a9fe8" stroke-width="0.8"/><ellipse cx="1.4" cy="4.8" rx="1.3" ry="1" fill="#3a9fe8"/><path d="M2.2 0.3L4.5 1.8" stroke="#3a9fe8" stroke-width="0.8"/></svg>
<div class="t" style="left:435.16px;top:226.58px;font-size:5.6px;color:#e6e6e6;transform:scaleX(0.861);-webkit-text-stroke:0.13px #e6e6e6;">Music</div>
<svg class="a" style="left:426.5px;top:236.4px" width="6.5" height="5" viewBox="0 0 6.5 5"><rect x="0" y="0" width="6.5" height="5" fill="#e8e8e8"/><rect x="0.6" y="0.6" width="5.3" height="3.8" fill="#4a90d0"/><path d="M0.6 4.4L2.5 2.5L4 3.6L5.9 2V4.4Z" fill="#2a5a90"/></svg>
<div class="t" style="left:435.16px;top:236.58px;font-size:5.6px;color:#e6e6e6;transform:scaleX(0.844);-webkit-text-stroke:0.13px #e6e6e6;">Pictures</div>
<svg class="a" style="left:427.0px;top:245.9px" width="5.5" height="6" viewBox="0 0 5.5 6"><rect x="0" y="0" width="5.5" height="6" fill="#555"/><rect x="1" y="0.8" width="3.5" height="4.4" fill="#3a80c8"/></svg>
<div class="t" style="left:435.16px;top:246.58px;font-size:5.6px;color:#e6e6e6;transform:scaleX(0.857);-webkit-text-stroke:0.13px #e6e6e6;">Videos</div>
<svg class="a" style="left:426.5px;top:255.89999999999998px" width="6.5" height="5.5" viewBox="0 0 6.5 5.5"><path d="M0.8 1.8H5.7L6.5 3.5V5.5H0V3.5Z" fill="#d8d8d8"/><rect x="0.5" y="3.8" width="5.5" height="1.2" fill="#888"/><path d="M0 0H3V2.2H0Z" fill="#2b8ee0"/></svg>
<div class="t" style="left:435.16px;top:256.58px;font-size:5.6px;color:#e6e6e6;transform:scaleX(0.861);-webkit-text-stroke:0.13px #e6e6e6;">Local Disk (C:)</div>
<svg class="a" style="left:426.5px;top:266.59999999999997px" width="6.5" height="5" viewBox="0 0 6.5 5"><path d="M0.8 0.3H5.7L6.5 2.5V4.7H0V2.5Z" fill="#d8d8d8"/><rect x="0.5" y="2.8" width="5.5" height="1.6" fill="#888"/><rect x="4.5" y="3.2" width="1" height="0.8" fill="#3c3"/></svg>
<div class="t" style="left:435.16px;top:266.58px;font-size:5.6px;color:#e6e6e6;transform:scaleX(0.857);-webkit-text-stroke:0.13px #e6e6e6;">Games Volume (D:)</div>
<svg class="a" style="left:426.5px;top:276.59999999999997px" width="6.5" height="5" viewBox="0 0 6.5 5"><path d="M0.8 0.3H5.7L6.5 2.5V4.7H0V2.5Z" fill="#d8d8d8"/><rect x="0.5" y="2.8" width="5.5" height="1.6" fill="#888"/><rect x="4.5" y="3.2" width="1" height="0.8" fill="#3c3"/></svg>
<div class="t" style="left:435.16px;top:276.58px;font-size:5.6px;color:#e6e6e6;transform:scaleX(0.895);-webkit-text-stroke:0.13px #e6e6e6;">Audio &amp; Video (E:)</div>
<svg class="a" style="left:426.5px;top:286.7px" width="6.5" height="5" viewBox="0 0 6.5 5"><path d="M0.8 0.3H5.7L6.5 2.5V4.7H0V2.5Z" fill="#d8d8d8"/><rect x="0.5" y="2.8" width="5.5" height="1.6" fill="#888"/><rect x="4.5" y="3.2" width="1" height="0.8" fill="#3c3"/></svg>
<div class="a" style="left:435px;top:284px;width:45px;height:10px;overflow:hidden">
<div class="t" style="left:0.16px;top:3.18px;font-size:5.6px;color:#e6e6e6;transform:scaleX(0.900);-webkit-text-stroke:0.13px #e6e6e6;">ROMs &amp; Virtual Machines</div>
</div>
<svg class="a" style="left:426.5px;top:296.7px" width="6.5" height="5" viewBox="0 0 6.5 5"><path d="M0.8 0.3H5.7L6.5 2.5V4.7H0V2.5Z" fill="#d8d8d8"/><rect x="0.5" y="2.8" width="5.5" height="1.6" fill="#888"/><rect x="4.5" y="3.2" width="1" height="0.8" fill="#3c3"/></svg>
<div class="t" style="left:435.16px;top:296.68px;font-size:5.6px;color:#e6e6e6;transform:scaleX(0.893);-webkit-text-stroke:0.13px #e6e6e6;">Utilities (G:)</div>
<svg class="a" style="left:426.5px;top:306.59999999999997px" width="6.5" height="5" viewBox="0 0 6.5 5"><path d="M0.8 0.3H5.7L6.5 2.5V4.7H0V2.5Z" fill="#d8d8d8"/><rect x="0.5" y="2.8" width="5.5" height="1.6" fill="#888"/><rect x="4.5" y="3.2" width="1" height="0.8" fill="#3c3"/></svg>
<div class="t" style="left:435.16px;top:306.58px;font-size:5.6px;color:#e6e6e6;transform:scaleX(0.840);-webkit-text-stroke:0.13px #e6e6e6;">USB Drive (H:)</div>
<svg class="a" style="left:426.5px;top:316.59999999999997px" width="6.5" height="5" viewBox="0 0 6.5 5"><path d="M0.8 0.3H5.7L6.5 2.5V4.7H0V2.5Z" fill="#d8d8d8"/><rect x="0.5" y="2.8" width="5.5" height="1.6" fill="#888"/><rect x="4.5" y="3.2" width="1" height="0.8" fill="#3c3"/></svg>
<div class="a" style="left:435px;top:313.9px;width:45px;height:10px;overflow:hidden">
<div class="t" style="left:0.16px;top:3.18px;font-size:5.6px;color:#e6e6e6;transform:scaleX(0.900);-webkit-text-stroke:0.13px #e6e6e6;">That one random Hard Drive</div>
</div>
<svg class="a" style="left:423.5px;top:329.7px" width="6.5" height="5" viewBox="0 0 6.5 5"><path d="M0.8 0.3H5.7L6.5 2.5V4.7H0V2.5Z" fill="#d8d8d8"/><rect x="0.5" y="2.8" width="5.5" height="1.6" fill="#888"/><rect x="4.5" y="3.2" width="1" height="0.8" fill="#3c3"/></svg>
<div class="t" style="left:432.16px;top:329.68px;font-size:5.6px;color:#e6e6e6;transform:scaleX(0.840);-webkit-text-stroke:0.13px #e6e6e6;">USB Drive (H:)</div>
<svg class="a" style="left:423px;top:341.5px" width="7" height="7" viewBox="0 0 7 7"><path d="M0.5 4L3.5 0.5L6.5 3L3.5 6.5Z" fill="#3a9fe8"/><path d="M1.5 3.5L5 2" stroke="#b8e0ff" stroke-width="0.6"/></svg>
<div class="t" style="left:431.66px;top:342.68px;font-size:5.6px;color:#e6e6e6;transform:scaleX(0.957);-webkit-text-stroke:0.13px #e6e6e6;">Network</div>
<div class="t" style="left:418.67px;top:433.24px;font-size:5.5px;color:#bdbdbd;transform:scaleX(0.937);-webkit-text-stroke:0.13px #bdbdbd;">0 items</div>
<div class="a" style="left:439px;top:432.5px;width:0.7px;height:5.5px;background:#aaa;"></div>
<div class="a" style="left:779.5px;top:430px;width:9px;height:9.5px;background:#4a4a4a;"></div>
<svg class="a" style="left:781.5px;top:432px" width="2" height="5" viewBox="0 0 2 5"><rect x="0" y="0" width="2" height="5" fill="#ddd"/></svg>
<svg class="a" style="left:790.5px;top:432.5px" width="6" height="4" viewBox="0 0 6 4"><rect x="0" y="0" width="6" height="4" fill="#ddd"/><rect x="0.6" y="0.6" width="4.8" height="2.8" fill="#3a80c8"/></svg>
<div class="a" style="left:412px;top:440px;width:388px;height:10px;background:#f0f0f0;"></div>
<div class="a" style="left:412px;top:440px;width:1px;height:10px;background:#7aa0c0;"></div>
<div class="a" style="left:736.5px;top:440.5px;width:0.7px;height:8.5px;background:#d8d8d8;"></div>
<div class="t" style="left:413.67px;top:442.74px;font-size:5.5px;color:#222;transform:scaleX(0.855);-webkit-text-stroke:0.2px #222;">0 items (Disk free space: 785 GB)</div>
<svg class="a" style="left:738px;top:441.5px" width="7.5" height="6.5" viewBox="0 0 7.5 6.5"><rect x="0" y="0" width="7.5" height="4.5" fill="#3a98e0"/><rect x="0.6" y="0.5" width="6.3" height="3.5" fill="#7cc4f4"/><rect x="2" y="5.2" width="3.5" height="1" fill="#888"/></svg>
<div class="t" style="left:746.67px;top:442.74px;font-size:5.5px;color:#222;transform:scaleX(0.936);-webkit-text-stroke:0.2px #222;">Computer</div>
<div class="a" style="left:412px;top:449px;width:388px;height:1px;background:#7f9db0;"></div>
</body></html>
